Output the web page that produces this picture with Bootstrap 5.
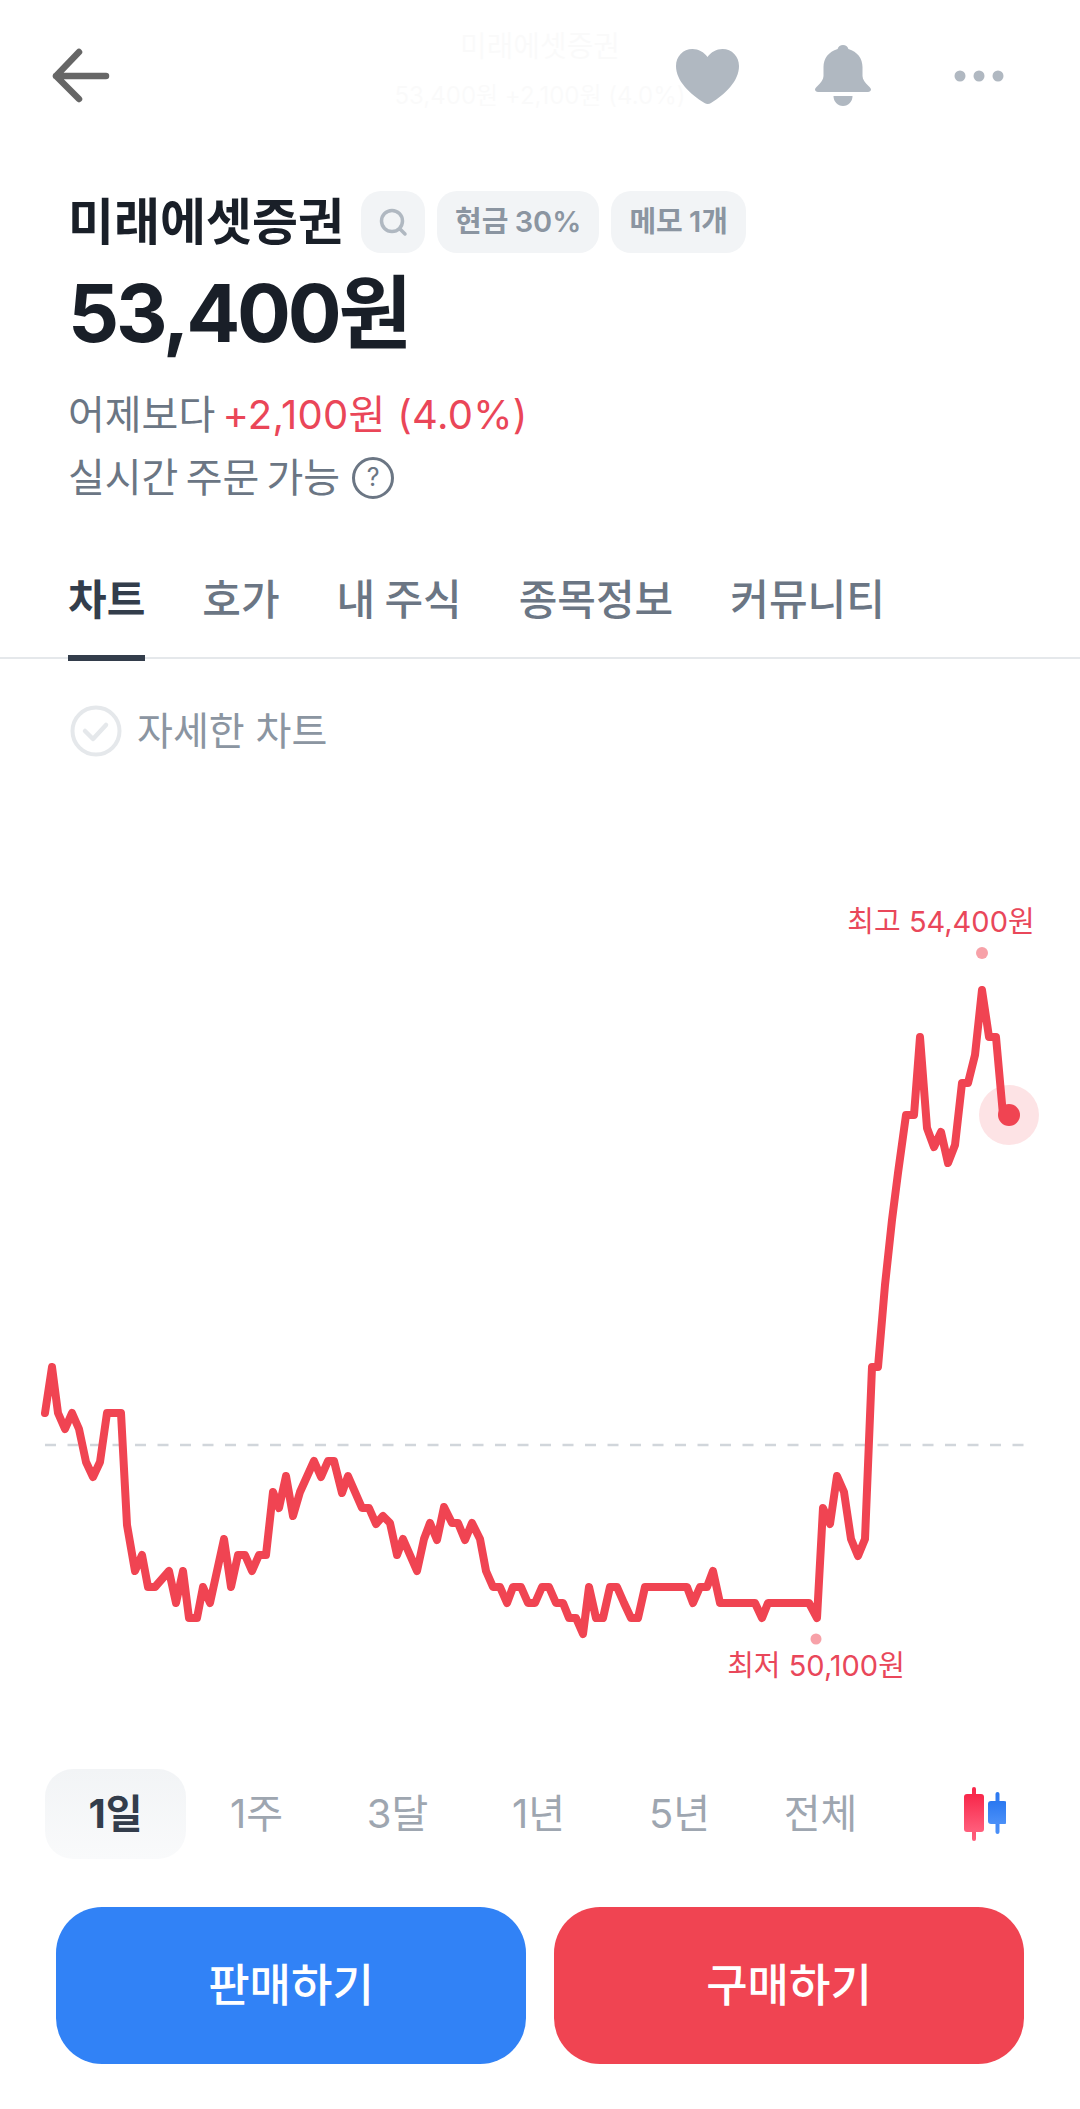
<!DOCTYPE html>
<html lang="ko">
<head>
    <meta charset="UTF-8">
    <meta name="viewport" content="width=device-width, initial-scale=1.0">
    <title>미래에셋증권</title>
    <link href="https://cdn.jsdelivr.net/npm/bootstrap@5.3.0/dist/css/bootstrap.min.css" rel="stylesheet">
    <style>
        body { width: 1080px; height: 2109px; overflow: hidden; background: #fff; font-family: "Inter", "Noto Sans CJK KR", sans-serif; color: #191f28; }
        .top-bar { height: 191px; padding: 0 33px 0 52px; position: relative; }
        .top-slot { width: 136px; }
        .top-group { margin-top: -40px; }
        .back-icon { margin-top: -40px; }
        .heart-icon { margin-top: 4px; }
        .ghost-title { position: absolute; left: 0; right: 0; top: 32px; text-align: center; opacity: .014; line-height: 1; }
        .ghost-name { font-size: 29px; margin-bottom: 23px; }
        .ghost-price { font-size: 24px; }
        .info-box { padding: 0 68px; }
        .stock-name { font-size: 50px; font-weight: 700; line-height: 62px; margin-right: 17px; }
        .pill-chip { height: 62px; border-radius: 20px; background: #f2f4f6; color: #8b95a1; font-size: 29px; font-weight: 600; padding: 0 18px; margin-right: 12px; word-spacing: -1px; }
        .pill-icon { width: 64px; padding: 0; }
        .stock-price { font-size: 80px; font-weight: 700; line-height: 100px; margin-top: 10px; letter-spacing: -3.2px; }
        .sub-line { font-size: 40px; line-height: 63px; color: #6b7684; word-spacing: -4px; }
        .sub-first { margin-top: 20px; }
        .up-red { color: #ea4658; word-spacing: 0; letter-spacing: .3px; }
        .help-mark { width: 42px; height: 42px; border: 3px solid #6b7684; border-radius: 50%; font-size: 25px; line-height: 1; margin-left: 12px; }
        .tab-row { height: 124px; margin-top: 26px; padding: 0 68px; border-bottom: 2px solid #e5e8eb; gap: 57px; }
        .tab-item { font-size: 42px; line-height: 1; color: #6b7684; padding: 22px 0 0; font-weight: 500; border-bottom: 6px solid transparent; margin-bottom: -4px; height: 104px; word-spacing: -2px; }
        .tab-item.is-on { color: #333d4b; font-weight: 700; border-bottom-color: #333d4b; }
        .detail-row { padding: 46px 0 0 70px; color: #8b95a1; font-size: 39px; line-height: 50px; gap: 15px; }
        .chart-svg { display: block; margin-top: -1px; }
        .chart-text { font-family: "Inter", "Noto Sans CJK KR", sans-serif; font-size: 29px; fill: #e9475a; }
        .range-row { padding: 0 0 0 45px; height: 90px; }
        .range-item { width: 141px; height: 90px; border-radius: 28px; font-size: 40px; color: #9ea6b0; }
        .range-item.is-on { background: linear-gradient(#f2f4f6, #f9fafb); color: #333d4b; font-weight: 700; }
        .candle-icon { margin-left: auto; margin-right: 74px; }
        .action-row { padding: 48px 56px 0; gap: 28px; }
        .action-btn { flex: 1; height: 157px; border: 0; border-radius: 46px; color: #fff; font-size: 45px; font-weight: 500; }
        .sell-btn, .sell-btn:hover { background: #3182f6; color: #fff; }
        .buy-btn, .buy-btn:hover { background: #f04452; color: #fff; }
    </style>
</head>
<body>
    <!-- Top bar -->
    <div class="top-bar d-flex align-items-center">
        <div class="ghost-title">
            <div class="ghost-name">미래에셋증권</div>
            <div class="ghost-price">53,400원 +2,100원 (4.0%)</div>
        </div>
        <svg width="60" height="60" viewBox="0 0 60 60" class="back-icon me-auto" fill="none" stroke="#666" stroke-width="6.5" stroke-linecap="round" stroke-linejoin="round">
            <path d="M54 30H4M27 6 4 30l23 23"/>
        </svg>
        <div class="top-group d-flex">
            <div class="top-slot d-flex justify-content-center">
                <svg class="heart-icon" width="63" height="55" viewBox="0 0 63 55" fill="#b0b8c1"><path d="M31.5 8C28 3 22.500 0 16.500 0 7 0 0 7.500 0 17c0 15 14 28 28.500 37 2 1.300 4.500 1.300 6.500 0C49.500 45 63 32 63 17 63 7.500 56 0 46.500 0c-6 0-11.500 3-15 8z"/></svg>
            </div>
            <div class="top-slot d-flex justify-content-center">
                <svg width="56" height="61" viewBox="0 0 56 61" fill="#b0b8c1"><path d="M28 0c2.600 0 4.700 1.700 5.400 3.900C42.500 6.500 47.500 13.500 47.500 22v9c0 3.500 2.500 6.500 6 10 1.500 1.500 2.500 2.500 2.500 3.500 0 1.500-1.500 2.500-3 2.500H3c-1.500 0-3-1-3-2.500 0-1 1-2 2.500-3.500 3.500-3.500 6-6.500 6-10V22c0-8.500 5-15.500 14.100-18.100C23.300 1.700 25.400 0 28 0z"/><path d="M18.500 51h19c0 5.500-4 10-9.500 10s-9.500-4.500-9.500-10z"/></svg>
            </div>
            <div class="top-slot d-flex justify-content-center align-items-center">
                <svg width="50" height="12" viewBox="0 0 50 12" fill="#b0b8c1"><circle cx="6" cy="6" r="5.500"/><circle cx="25" cy="6" r="5.500"/><circle cx="44" cy="6" r="5.500"/></svg>
            </div>
        </div>
    </div>

    <!-- Stock info -->
    <div class="info-box">
        <div class="d-flex align-items-center">
            <div class="stock-name">미래에셋증권</div>
            <div class="pill-chip pill-icon d-flex align-items-center justify-content-center">
                <svg width="30" height="30" viewBox="0 0 30 30" fill="none" stroke="#b0b8c1" stroke-width="3.500" stroke-linecap="round"><circle cx="14" cy="14" r="10.500"/><path d="M22 22l5 5"/></svg>
            </div>
            <div class="pill-chip d-flex align-items-center">현금 30%</div>
            <div class="pill-chip d-flex align-items-center">메모 1개</div>
        </div>
        <div class="stock-price">53,400원</div>
        <div class="sub-line sub-first">어제보다 <span class="up-red">+2,100원 (4.0%)</span></div>
        <div class="sub-line d-flex align-items-center">실시간 주문 가능<span class="help-mark d-inline-flex align-items-center justify-content-center">?</span></div>
    </div>

    <!-- Tabs -->
    <div class="tab-row d-flex align-items-end">
        <div class="tab-item is-on">차트</div>
        <div class="tab-item">호가</div>
        <div class="tab-item">내 주식</div>
        <div class="tab-item">종목정보</div>
        <div class="tab-item">커뮤니티</div>
    </div>

    <div class="detail-row d-flex align-items-center">
        <svg width="52" height="52" viewBox="0 0 52 52" fill="none" stroke="#e5e8eb"><circle cx="26" cy="26" r="23.500" stroke-width="4"/><path d="M15 26l8 8 13-14" stroke-width="4.500" stroke-linecap="round" stroke-linejoin="round"/></svg>
        자세한 차트
    </div>

    <!-- Chart -->
    <svg class="chart-svg" id="price-chart" width="1080" height="1013" viewBox="0 756 1080 1013" fill="none">
        <line x1="45" y1="1445" x2="1026" y2="1445" stroke="#d1d6db" stroke-width="2.500" stroke-dasharray="11 11.500"/>
        <polyline id="price-line" stroke="#f04452" stroke-width="8" stroke-linejoin="round" stroke-linecap="round"/>
        <circle cx="1009" cy="1115" r="30" fill="#f04452" fill-opacity=".15"/>
        <circle cx="1009" cy="1115" r="11" fill="#f04452"/>
        <circle cx="982" cy="953" r="6" fill="#f04452" fill-opacity=".5"/>
        <circle cx="816" cy="1639" r="5.500" fill="#f04452" fill-opacity=".5"/>
        <text class="chart-text" x="941" y="932" text-anchor="middle">최고 54,400원</text>
        <text class="chart-text" x="816" y="1676" text-anchor="middle">최저 50,100원</text>
    </svg>

    <!-- Range -->
    <div class="range-row d-flex align-items-center">
        <div class="range-item is-on d-flex align-items-center justify-content-center">1일</div>
        <div class="range-item d-flex align-items-center justify-content-center">1주</div>
        <div class="range-item d-flex align-items-center justify-content-center">3달</div>
        <div class="range-item d-flex align-items-center justify-content-center">1년</div>
        <div class="range-item d-flex align-items-center justify-content-center">5년</div>
        <div class="range-item d-flex align-items-center justify-content-center">전체</div>
        <svg class="candle-icon" width="44" height="54" viewBox="0 0 44 54">
            <defs>
                <linearGradient id="red-candle" x1="0" y1="0" x2="0" y2="1"><stop offset="0" stop-color="#f8274a"/><stop offset="1" stop-color="#ff5f7c"/></linearGradient>
                <linearGradient id="blue-candle" x1="0" y1="0" x2="0" y2="1"><stop offset="0" stop-color="#2b78f0"/><stop offset="1" stop-color="#4b90f8"/></linearGradient>
            </defs>
            <rect x="10" y="0" width="4" height="54" rx="2" fill="url(#red-candle)"/>
            <rect x="2" y="7" width="20" height="38" rx="3" fill="url(#red-candle)"/>
            <rect x="33.500" y="5" width="4" height="42" rx="2" fill="url(#blue-candle)"/>
            <rect x="26" y="14" width="19" height="23" rx="3" fill="url(#blue-candle)"/>
        </svg>
    </div>

    <!-- Buy / sell -->
    <div class="action-row d-flex">
        <button class="btn action-btn sell-btn">판매하기</button>
        <button class="btn action-btn buy-btn">구매하기</button>
    </div>

    <script>
        // Chart points, traced from the picture (page coordinates)
const points = [
    [45,1413],[52,1367],[58,1413],[65,1429],[72,1413],[79,1429],[86,1462],[93,1477],[100,1462],[107,1413],[121,1413],
    [127,1525],[135,1571],[142,1555],[148,1587],[155,1587],[169,1571],[176,1603],[183,1571],[189,1618],[197,1618],
    [203,1587],[210,1603],[224,1539],[231,1587],[238,1555],[245,1555],[252,1571],[259,1555],[266,1555],[273,1492],
    [279,1508],[286,1476],[293,1516],[300,1492],[314,1461],[321,1477],[328,1461],[334,1461],[342,1493],[348,1476],
    [362,1508],[369,1508],[376,1524],[383,1516],[390,1523],[397,1555],[403,1539],[417,1571],[424,1539],[430,1523],
    [437,1540],[444,1507],[452,1523],[458,1523],[465,1540],[472,1523],[480,1539],[486,1571],[493,1587],[500,1587],
    [507,1603],[513,1587],[521,1587],[528,1603],[535,1603],[542,1587],[549,1587],[556,1603],[563,1603],[569,1618],
    [576,1618],[583,1634],[589,1587],[596,1618],[603,1618],[610,1587],[617,1587],[624,1603],[631,1618],[638,1618],
    [645,1587],[687,1587],[693,1603],[700,1587],[707,1587],[713,1571],[720,1603],[755,1603],[762,1618],[768,1603],
    [809,1603],[817,1618],[823,1508],[830,1524],[837,1476],[844,1492],[851,1539],[858,1556],[865,1539],[872,1367],
    [878,1367],[885,1285],[892,1220],[898,1173],[906,1115],[914,1115],[920,1037],[927,1128],[934,1147],[941,1132],
    [948,1163],[955,1145],[962,1083],[968,1083],[975,1055],[982,990],[989,1037],[996,1037],[1003,1115]
];
document.getElementById("price-line").setAttribute("points", points.map(p => p.join(",")).join(" "));
    </script>
    <script src="https://cdn.jsdelivr.net/npm/bootstrap@5.3.0/dist/js/bootstrap.bundle.min.js"></script>
</body>
</html>
